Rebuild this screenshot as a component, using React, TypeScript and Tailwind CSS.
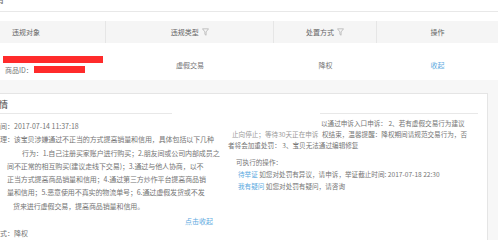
import React from 'react'

function Funnel() {
  return (
    <svg width="7" height="8" viewBox="0 0 7 8" className="ml-[3px] shrink-0">
      <path d="M0.5 0.8 H6.5 L4.1 3.9 V7.2 L2.9 6.4 V3.9 Z" fill="none" stroke="#b5b5b5" strokeWidth="0.8" />
    </svg>
  )
}

const detailLines = [
  { text: '理：该宝贝涉嫌通过不正当的方式提高销量和信用，具体包括以下几种', pl: 'pl-0' },
  { text: '行为：1.自己注册买家账户进行购买；2.朋友间或公司内部成员之', pl: 'pl-[22px]' },
  { text: '间不正常的相互购买(建议走线下交易)；3.通过与他人协商，以不', pl: 'pl-[7px]' },
  { text: '正当方式提高商品销量和信用；4.通过第三方炒作平台提高商品销', pl: 'pl-[7px]' },
  { text: '量和信用；5.恶意使用不真实的物流单号；6.通过虚假发货或不发', pl: 'pl-[7px]' },
  { text: '货来进行虚假交易，提高商品销量和信用。', pl: 'pl-[13px]' },
]

export default function App() {
  return (
    <div className="w-[498px] h-[240px] overflow-hidden bg-[#f7f7f7] font-['Noto_Sans_CJK_SC','Liberation_Sans',sans-serif] text-[#757575]">
      {/* table */}
      <div className="bg-white">
        <div className="h-[12px] border-b border-[#e8e8e8] overflow-hidden">
          <div className="-mt-[6px] -ml-[6px] text-[10px] leading-[10px] text-[#777]">情</div>
        </div>
        <div className="h-[9px]" />
        <div className="flex h-[22px] bg-[#f5f5f5] text-[7px] text-[#666] items-center">
          <div className="w-[110px] h-full flex items-center pl-[12px] border-r border-[#e6e6e6]">违规对象</div>
          <div className="w-[175px] h-full flex items-center justify-center border-r border-[#e6e6e6]">
            违规类型<Funnel />
          </div>
          <div className="w-[107px] h-full flex items-center justify-center border-r border-[#e6e6e6]">
            处置方式<Funnel />
          </div>
          <div className="w-[126px] h-full flex items-center justify-center">操作</div>
        </div>
        <div className="flex h-[37px] text-[7px] items-center">
          <div className="w-[110px] flex flex-col pl-[3px] pt-[6px]">
            <div className="w-[100px] h-[7px] bg-[#ff2b2b]" />
            <div className="flex items-center mt-[3px] pl-[2px]">
              <span className="leading-[8px]">商品ID：</span>
              <span className="w-[51px] h-[7px] bg-[#ff2b2b] ml-[1px]" />
            </div>
          </div>
          <div className="w-[175px] text-center pt-[8px]">虚假交易</div>
          <div className="w-[107px] text-center pt-[8px]">降权</div>
          <div className="w-[126px] text-center pt-[8px] text-[#5aa9e0]">收起</div>
        </div>
      </div>

      {/* detail panel */}
      <div className="pt-[13px]">
        <div className="w-[488px] h-[160px] bg-white border-t border-r border-[#e5e5e5] flex">
          <div className="w-[230px] flex flex-col text-[7px]">
            <div className="w-[173px] border-b border-[#e8e8e8] pt-[5px] pb-[2px] text-[9px] leading-[12px] text-[#444] -ml-[1px]">情</div>
            <div className="mt-[6px] leading-[13.3px] whitespace-nowrap">间：2017-07-14 11:37:18</div>
            {detailLines.map((l) => (
              <div key={l.text} className={`leading-[13.3px] whitespace-nowrap tracking-[-0.1px] ${l.pl}`}>
                {l.text}
              </div>
            ))}
            <div className="mt-[2px] leading-[13px] text-right pr-[17px] text-[#5aa9e0]">点击收起</div>
            <div className="leading-[11px] whitespace-nowrap">式：降权</div>
          </div>

          <div className="flex-1 flex flex-col text-[6.6px] leading-[11px] whitespace-nowrap">
            <div className="ml-[90px] w-[158px] h-[20px] border-b border-[#e8e8e8]" />
            <div className="mt-[4px] pl-[91px]">以通过申诉入口申诉： 2、若有虚假交易行为建议</div>
            <div className="relative pl-[2px] text-[#999]">
              止向停止；等待30天正在申诉
              <span className="absolute left-[92px] top-0 text-[#757575] bg-white/40">权结束，温馨提醒：降权期间请规范交易行为，否</span>
            </div>
            <div className="-ml-[2px]">者将会加重处罚： 3、宝贝无法通过编辑修复</div>
            <div className="mt-[6px] pl-[6px]">可执行的操作：</div>
            <div className="pl-[8px] mt-[1px]">
              <span className="text-[#5aa9e0]">待举证</span> 如您对处罚有异议，请申诉，举证截止时间: 2017-07-18 22:30
            </div>
            <div className="pl-[8px] mt-[1px]">
              <span className="text-[#5aa9e0]">我有疑问</span> 如您对处罚有疑问，请咨询
            </div>
          </div>
        </div>
      </div>
    </div>
  )
}
